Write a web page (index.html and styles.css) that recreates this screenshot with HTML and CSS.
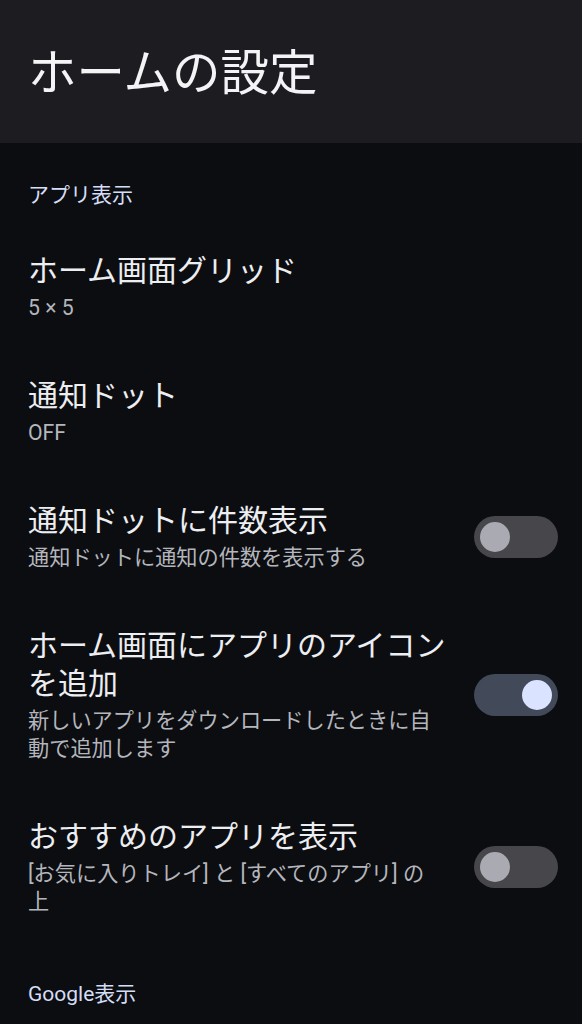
FILE: index.html
```html
<!DOCTYPE html>
<html>
<head>
  <title>ホームの設定</title>
  <link rel="stylesheet" href="styles.css">
</head>
<body>
  <header class="top-bar">
    <h1>ホームの設定</h1>
  </header>

  <main>
    <h2 class="section-title">アプリ表示</h2>

    <div class="pref">
      <div class="pref-text">
        <div class="pref-title">ホーム画面グリッド</div>
        <div class="pref-summary">5 × 5</div>
      </div>
    </div>

    <div class="pref">
      <div class="pref-text">
        <div class="pref-title">通知ドット</div>
        <div class="pref-summary">OFF</div>
      </div>
    </div>

    <div class="pref">
      <div class="pref-text">
        <div class="pref-title">通知ドットに件数表示</div>
        <div class="pref-summary">通知ドットに通知の件数を表示する</div>
      </div>
      <div class="switch"><span class="knob"></span></div>
    </div>

    <div class="pref">
      <div class="pref-text">
        <div class="pref-title">ホーム画面にアプリのアイコンを追加</div>
        <div class="pref-summary">新しいアプリをダウンロードしたときに自動で追加します</div>
      </div>
      <div class="switch on"><span class="knob"></span></div>
    </div>

    <div class="pref">
      <div class="pref-text">
        <div class="pref-title">おすすめのアプリを表示</div>
        <div class="pref-summary">[お気に入りトレイ] と [すべてのアプリ] の<br>上</div>
      </div>
      <div class="switch"><span class="knob"></span></div>
    </div>

    <h2 class="section-title">Google表示</h2>
  </main>
</body>
</html>
```

FILE: styles.css
```css
body {
  margin: 0;
  padding: 0;
  background-color: #0c0d10;
  color: #e6e7ec;
  font-family: Roboto, "Noto Sans CJK JP", sans-serif;
}

.top-bar {
  background-color: #1d1c21;
  height: 143px;
  padding: 0 28px;
  box-sizing: border-box;
}

.top-bar h1 {
  margin: 0;
  padding-top: 46px;
  font-size: 48.5px;
  line-height: 56px;
  font-weight: 400;
  color: #f4f4f6;
}

.section-title {
  margin: 0;
  padding: 38px 28px 16px;
  font-size: 21px;
  line-height: 28px;
  font-weight: 400;
  color: #d4def6;
}

.section-title:last-child {
  padding-top: 36px;
}

.pref {
  display: flex;
  align-items: center;
  padding: 27px 24px 28px 28px;
  gap: 24px;
}

.pref-text {
  flex: 1;
  min-width: 0;
}

.pref-title {
  font-size: 30px;
  line-height: 38px;
  color: #eceef2;
}

.pref-summary {
  margin-top: 4px;
  font-size: 21.2px;
  line-height: 28px;
  color: #b4b6bd;
}

.switch {
  flex: none;
  width: 84px;
  height: 42px;
  border-radius: 21px;
  background-color: #47464b;
  display: flex;
  align-items: center;
  padding: 0 6px;
  box-sizing: border-box;
}

.switch .knob {
  width: 30px;
  height: 30px;
  border-radius: 50%;
  background-color: #a9aab2;
}

.switch.on {
  background-color: #424959;
  justify-content: flex-end;
}

.switch.on .knob {
  background-color: #dae3ff;
}
```
